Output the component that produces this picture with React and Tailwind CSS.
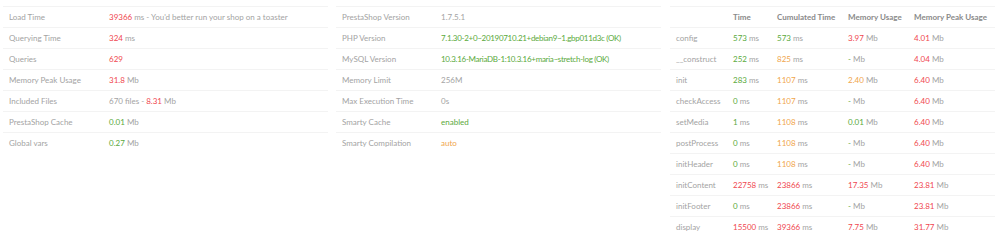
import React from "react";

const R = "text-[#f0474f]";
const G = "text-[#5aa93c]";
const O = "text-[#f0a54a]";

const V = ({ c, v, u }) => (
  <>
    <span className={c}>{v}</span>
    {u ? <span> {u}</span> : null}
  </>
);

const col1 = [
  ["Load Time", <><span className={R}>39366</span> ms - You'd better run your shop on a toaster</>],
  ["Querying Time", <V c={R} v="324" u="ms" />],
  ["Queries", <V c={R} v="629" />],
  ["Memory Peak Usage", <V c={R} v="31.8" u="Mb" />],
  ["Included Files", <>670 files - <span className={R}>8.31</span> Mb</>],
  ["PrestaShop Cache", <V c={G} v="0.01" u="Mb" />],
  ["Global vars", <V c={G} v="0.27" u="Mb" />],
];

const col2 = [
  ["PrestaShop Version", "1.7.5.1"],
  ["PHP Version", <span className={G + " tracking-[-0.3px]"}>7.1.30-2+0~20190710.21+debian9~1.gbp011d3c (OK)</span>],
  ["MySQL Version", <span className={G + " tracking-[-0.3px]"}>10.3.16-MariaDB-1:10.3.16+maria~stretch-log (OK)</span>],
  ["Memory Limit", "256M"],
  ["Max Execution Time", "0s"],
  ["Smarty Cache", <span className={G}>enabled</span>],
  ["Smarty Compilation", <span className={O}>auto</span>],
];

const col3 = [
  ["config", [G, "573"], [G, "573"], [R, "3.97"], [R, "4.01"]],
  ["__construct", [G, "252"], [O, "825"], [G, "-"], [R, "4.04"]],
  ["init", [G, "283"], [O, "1107"], [O, "2.40"], [R, "6.40"]],
  ["checkAccess", [G, "0"], [O, "1107"], [G, "-"], [R, "6.40"]],
  ["setMedia", [G, "1"], [O, "1108"], [G, "0.01"], [R, "6.40"]],
  ["postProcess", [G, "0"], [O, "1108"], [G, "-"], [R, "6.40"]],
  ["initHeader", [G, "0"], [O, "1108"], [G, "-"], [R, "6.40"]],
  ["initContent", [R, "22758"], [R, "23866"], [R, "17.35"], [R, "23.81"]],
  ["initFooter", [G, "0"], [R, "23866"], [G, "-"], [R, "23.81"]],
  ["display", [R, "15500"], [R, "39366"], [R, "7.75"], [R, "31.77"]],
];

const td = "h-[21px] px-[6px] py-0 align-middle border-t border-[#f3f3f3] whitespace-nowrap";

function KV({ rows, w }) {
  return (
    <table className="w-full border-collapse table-fixed">
      <colgroup>
        <col style={{ width: w }} />
        <col />
      </colgroup>
      <tbody>
        {rows.map(([k, v]) => (
          <tr key={k}>
            <td className={td}>{k}</td>
            <td className={td}>{v}</td>
          </tr>
        ))}
      </tbody>
    </table>
  );
}

export default function App() {
  return (
    <div
      className="w-[1000px] h-[249px] bg-white text-[8px] text-[#a3a3a3] leading-[11px]"
      style={{ fontFamily: "Lato, 'Open Sans', sans-serif" }}
    >
      <div className="flex pt-[6px]">
        <div className="w-[333px] pl-[3px] pr-[5px]">
          <KV rows={col1} w={100} />
        </div>
        <div className="w-[333px] pl-[3px] pr-[5px]">
          <KV rows={col2} w={99} />
        </div>
        <div className="w-[334px] pl-[4px] pr-[5px]">
          <table className="w-full border-collapse table-fixed">
            <colgroup>
              <col className="w-[57px]" />
              <col className="w-[44px]" />
              <col className="w-[71px]" />
              <col className="w-[66px]" />
              <col />
            </colgroup>
            <thead>
              <tr>
                <th className={td + " text-left"}></th>
                <th className={td + " text-left font-bold text-[#8a8a8a]"}>Time</th>
                <th className={td + " text-left font-bold text-[#8a8a8a]"}>Cumulated Time</th>
                <th className={td + " text-left font-bold text-[#8a8a8a]"}>Memory Usage</th>
                <th className={td + " text-left font-bold text-[#8a8a8a]"}>Memory Peak Usage</th>
              </tr>
            </thead>
            <tbody>
              {col3.map(([k, a, b, c, d]) => (
                <tr key={k}>
                  <td className={td}>{k}</td>
                  <td className={td}><V c={a[0]} v={a[1]} u="ms" /></td>
                  <td className={td}><V c={b[0]} v={b[1]} u="ms" /></td>
                  <td className={td}><V c={c[0]} v={c[1]} u="Mb" /></td>
                  <td className={td}><V c={d[0]} v={d[1]} u="Mb" /></td>
                </tr>
              ))}
            </tbody>
          </table>
        </div>
      </div>
    </div>
  );
}
